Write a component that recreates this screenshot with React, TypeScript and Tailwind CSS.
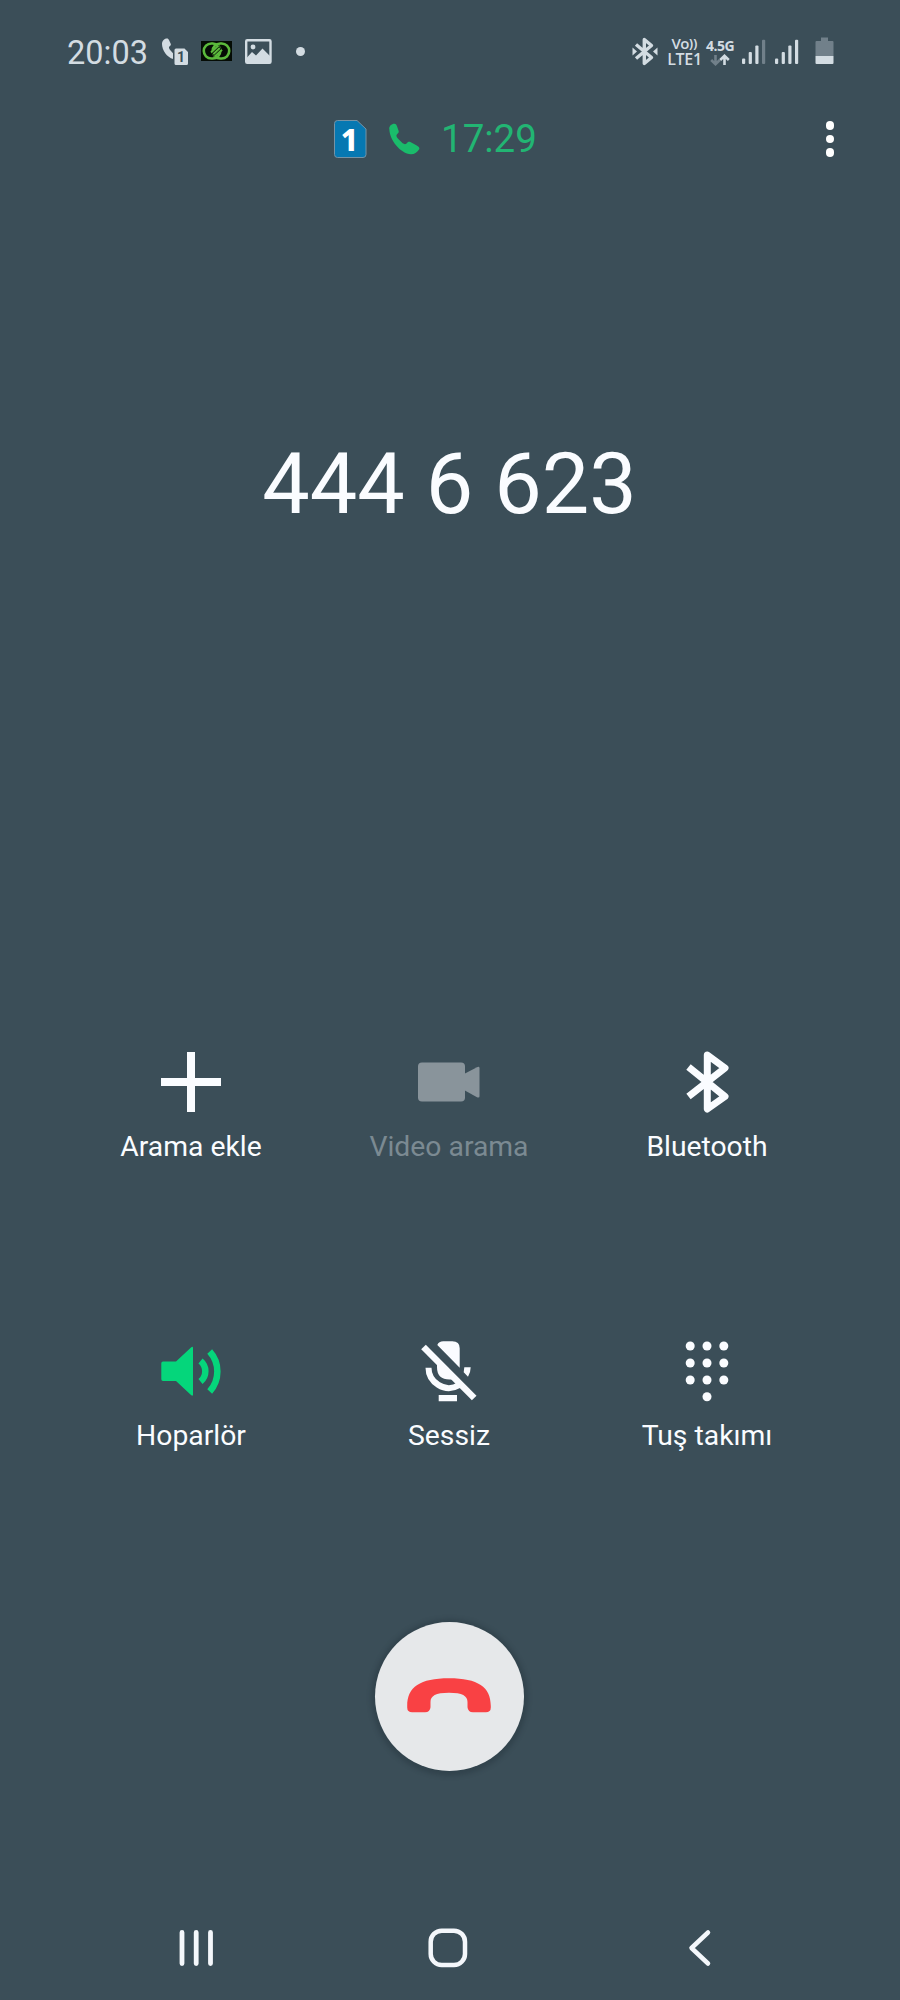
import type { ReactNode } from 'react';

const HANDSET =
  'M7 22C5 12 14 5 22 5c5 0 7 4 8 8l5 14c1 4-1 6-6 11-2 3 0 7 5 13l13 13c5 3 8 3 11 1 5-6 7-7 12-5l18 10c7 4 10 7 9 11-5 9-14 16-25 16C40 95 8 55 7 22Z';

function StatusBar() {
  return (
    <div className="flex h-[89px] shrink-0 items-start pl-[67px] pt-[32px] text-[#d3dce2]">
      <span className="mt-px h-10 w-[95px] text-[32.5px] leading-10">20:03</span>

      {/* Ongoing call on SIM 1 */}
      <div className="relative mt-[6px] h-7 w-[27px]">
        <svg className="h-[22px] w-[20px]" viewBox="0 0 20 22" fill="currentColor">
          <path d="M0 6C0 3 2 .5 5 .5c1 0 1.600.5 2 1.600L8.800 6c.3 1-.3 1.600-1.500 2.600-.7.8-.2 2 .6 3.200L11.200 15.500V21C5 19.500 0 12 0 6Z" />
        </svg>
        <svg className="absolute left-[11px] top-[9px] h-[19px] w-[16px]" viewBox="0 0 16 19">
          <path fill="#3b4e58" d="M0 0h16v19H0z" />
          <path fill="currentColor" d="M3 1.500h8.500l3.500 3.500V16.500a1.500 1.500 0 0 1-1.500 1.500H3a1.500 1.500 0 0 1-1.500-1.500V3A1.500 1.500 0 0 1 3 1.500Z" />
        </svg>
        <span className="absolute left-[12px] top-[12px] w-[14px] text-center text-[14px] font-bold leading-[14px] text-[#3b4e58]">1</span>
      </div>

      <svg className="ml-[12px] mt-[9px] h-[20px] w-[31px]" viewBox="0 0 31 20" fill="none" stroke="#5bb93c" strokeWidth="2.600">
        <path fill="#050c05" stroke="none" d="M0 0h31v20H0z" />
        <rect x="2.800" y="2.500" width="16.500" height="15" rx="7.500" />
        <rect x="11.700" y="2.500" width="16.500" height="15" rx="7.500" />
        <path stroke="#050c05" strokeWidth="6.500" d="M11.500 13.500 19.500 6.500" />
        <path strokeWidth="2" d="M10 11.500 17.500 4.500M12.300 13.300l6.500-6.300M13.500 15.800l7.500-7" />
      </svg>

      <svg className="ml-[13px] mt-[7px] h-[25px] w-[27px]" viewBox="0 0 27 25">
        <rect x="1.200" y="1.200" width="24.300" height="22.500" rx="1" fill="none" stroke="currentColor" strokeWidth="2.400" />
        <circle cx="8" cy="8" r="2.400" fill="currentColor" />
        <path fill="currentColor" d="M2 18.500 7 13l4 3.500 6.500-7L25 17v7H2z" />
      </svg>
      <span className="ml-[24px] mt-[15px] size-[8.500px] rounded-full bg-current" />

      {/* Right side indicators */}
      <svg className="ml-[327px] mt-[5px] h-[29px] w-[26px]" viewBox="0 0 26 29" fill="none" stroke="currentColor" strokeWidth="3.400">
        <path strokeLinejoin="round" d="M4 7.500 19.500 20.500l-7.200 6V2.500l7.200 6L4 21.500" />
        <path fill="currentColor" stroke="none" d="M.5 10.500 5 14.500.5 18.500zM25.500 10.500 21 14.500l4.500 4z" />
      </svg>
      <div className="ml-[9px] mt-[4px] flex w-[36px] flex-col items-center font-['Open_Sans',sans-serif] font-semibold">
        <span className="flex h-[15px] items-center whitespace-nowrap text-[15px] leading-[15px] tracking-[-0.500px]">
          Vo<span className="text-[12px] font-bold leading-[12px] tracking-[0.300px]">))</span>
        </span>
        <span className="whitespace-nowrap text-[16px] leading-[16px] tracking-[-0.300px]">LTE1</span>
      </div>
      <div className="ml-[3px] mt-[7px] flex w-[29px] flex-col items-center">
        <span className="font-['Open_Sans',sans-serif] text-[14px] font-bold leading-[14px] tracking-[-0.500px]">4.5G</span>
        <svg className="mt-[1px] h-[12px] w-[20px]" viewBox="0 0 20 12" fill="none" strokeWidth="2.600">
          <path stroke="#71808a" d="M5.500 1v9M1.200 6l4.300 4.200L9.800 6" />
          <path stroke="currentColor" d="M14.500 11V2M10.200 6l4.300-4.200L18.800 6" />
        </svg>
      </div>
      <Signal className="ml-[7px]" lastBar="fill-[#71808a]" />
      <Signal className="ml-[9px]" lastBar="fill-current" />
      <svg className="ml-[16px] mt-[5px] h-[28px] w-[19px]" viewBox="0 0 19 28">
        <path fill="#71808a" d="M6 .5h7V4h4.500a1 1 0 0 1 1 1v14H.5V5a1 1 0 0 1 1-1H6z" />
        <path fill="currentColor" d="M.5 19h18v7a1 1 0 0 1-1 1h-16a1 1 0 0 1-1-1z" />
      </svg>
    </div>
  );
}

function Signal({ className, lastBar }: { className: string; lastBar: string }) {
  return (
    <svg className={`mt-[7px] h-[26px] w-[24px] shrink-0 ${className}`} viewBox="0 0 24 26" fill="currentColor">
      <rect x="0" y="19.500" width="3.200" height="5.500" rx="1" />
      <rect x="6.700" y="13" width="3.200" height="12" rx="1" />
      <rect x="13.300" y="6.500" width="3.200" height="18.500" rx="1" />
      <rect x="20" y="0.800" width="3.200" height="24.200" rx="1" className={lastBar} />
    </svg>
  );
}

function CallHeader() {
  return (
    <div className="flex h-[100px] shrink-0 items-center pl-[334px] pr-[66px]">
      <div className="relative h-[38px] w-[33px]">
        <svg className="h-[38px] w-[33px]" viewBox="0 0 33 38">
          <path fill="#0678b2" stroke="#7593a6" d="M3.500.5h19.500l9 8.500v25.500a3 3 0 0 1-3 3H3.500a3 3 0 0 1-3-3v-31a3 3 0 0 1 3-3Z" />
        </svg>
        <span className="absolute inset-0 right-[2px] text-center font-['Noto_Sans',sans-serif] text-[30px] font-extrabold leading-[40px] text-white">1</span>
      </div>
      <svg className="ml-[20px] size-[34px]" viewBox="0 0 102 102" fill="#1abc6b">
        <path d={HANDSET} />
      </svg>
      <span className="ml-[20px] text-[38.5px] leading-[44px] text-[#22b573]">17:29</span>
      <button className="ml-auto flex flex-col gap-[5px]" aria-label="Menu">
        <span className="size-[8.500px] rounded-full bg-white" />
        <span className="size-[8.500px] rounded-full bg-white" />
        <span className="size-[8.500px] rounded-full bg-white" />
      </button>
    </div>
  );
}

type Action = { label: string; icon: ReactNode; disabled?: boolean };

const ACTIONS: Action[] = [
  {
    label: 'Arama ekle',
    icon: <path fill="#fafcff" d="M28 2h8v26h26v8H36v26h-8V36H2v-8h26z" />,
  },
  {
    label: 'Video arama',
    disabled: true,
    icon: (
      <g fill="#89949b">
        <rect x="1" y="12.500" width="47" height="39" rx="4" />
        <path d="M47 24 60 17.200q2.500-1 2.500 1v28q0 2-2.500 1L47 40z" />
      </g>
    ),
  },
  {
    label: 'Bluetooth',
    icon: <path fill="none" stroke="#fafcff" strokeWidth="7" strokeLinejoin="round" d="M13.500 17 50 46.500 32.300 59V5L50 18 13.500 46.500" />,
  },
  {
    label: 'Hoparlör',
    icon: (
      <g fill="#05d67b">
        <path d="M4 22.500h13L32 8.500q2-1.500 2 .5v46.500q0 2-2 .5L17 42H4q-1.700 0-1.700-1.700V24.200q0-1.700 1.700-1.700Z" />
        <path fill="none" stroke="#05d67b" strokeWidth="6.500" d="M41.500 22a13.300 13.300 0 0 1 0 20.500M50.700 12.500a29.900 29.900 0 0 1 0 40" />
      </g>
    ),
  },
  {
    label: 'Sessiz',
    icon: (
      <g fill="#fafcff">
        <path d="M20.300 6q1.500-3.700 6-3.700h9q7.400 0 7.400 7v19.400zM20 24.500 36 40.300q-16 1.700-16-12z" />
        <path fill="none" stroke="#fafcff" strokeWidth="6" d="M11.500 28.700c0 14 16 26 30.500 17.500" />
        <path fill="none" stroke="#fafcff" strokeWidth="6.500" d="m6.500 8 50.700 51" />
        <path d="M47.300 28.300h6.400q0 5-2.700 9.400l-4.300-4.400zM21.700 56H40v6.300H21.700z" />
      </g>
    ),
  },
  {
    label: 'Tuş takımı',
    icon: (
      <g fill="#fafcff">
        {[7, 24, 41].map((y) => [15.2, 32, 48.8].map((x) => <circle key={`${x}-${y}`} cx={x} cy={y} r="4.500" />))}
        <circle cx="32" cy="57.700" r="4.500" />
      </g>
    ),
  },
];

function ActionGrid() {
  return (
    <div className="grid auto-rows-[289px] grid-cols-[258px_258px_258px] pl-[62px]">
      {ACTIONS.map(({ label, icon, disabled }) => (
        <button key={label} disabled={disabled} className="flex flex-col items-center">
          <svg className="size-16" viewBox="0 0 64 64">{icon}</svg>
          <span className={`mt-[15px] text-[28.3px] leading-9 ${disabled ? 'text-[#7b8a92]' : 'text-[#fafcff]'}`}>
            {label}
          </span>
        </button>
      ))}
    </div>
  );
}

function NavBar() {
  return (
    <nav className="mt-auto grid h-[104px] shrink-0 grid-cols-[252px_252px_252px] place-items-center pl-[70px]">
      <svg className="h-10 w-10" viewBox="0 0 40 40" fill="none" stroke="#f4f7fb" strokeWidth="4.800" strokeLinecap="round">
        <path d="M6 4.500v31M20.200 4.500v31M34.500 4.500v31" />
      </svg>
      <svg className="h-10 w-10" viewBox="0 0 40 40" fill="none" stroke="#f4f7fb" strokeWidth="4.500">
        <rect x="2.700" y="2.700" width="34.300" height="34.300" rx="11" />
      </svg>
      <svg className="h-10 w-10" viewBox="0 0 40 40" fill="none" stroke="#f4f7fb" strokeWidth="4.500" strokeLinecap="round" strokeLinejoin="round">
        <path d="M28 4.500 11.500 20 28 35.500" />
      </svg>
    </nav>
  );
}

export default function App() {
  return (
    <div className="flex h-[2000px] w-[900px] flex-col overflow-hidden bg-[#3b4e58] font-[Roboto,sans-serif]">
      <StatusBar />
      <CallHeader />
      <h1 className="mt-[246px] pr-[1px] text-center text-[84.5px] leading-[100px] text-[#fafcff]">444 6 623</h1>
      <div className="mt-[515px]">
        <ActionGrid />
      </div>

      {/* Hang up */}
      <button
        className="ml-[375px] mt-[-6px] flex size-[149px] items-center justify-center rounded-full bg-[#e6e8ea] shadow-[0_1px_4px_4px_rgba(35,48,56,0.350)]"
        aria-label="Aramayı sonlandır"
      >
        <svg className="mr-[1px] mt-[-2px] h-[35px] w-[84px]" viewBox="0 0 84 35" fill="#f94144">
          <path d="M.2 28C.2 9 13 .3 42 .3S83.800 9 83.800 28v1.500q0 4.800-5 4.800H66q-5 0-5.500-5V24c0-6-5-9.200-18.500-9.200S23.500 18 23.500 24v5.300q-.5 5-5.500 5H5.200q-5 0-5-4.800z" />
        </svg>
      </button>
      <NavBar />
    </div>
  );
}
